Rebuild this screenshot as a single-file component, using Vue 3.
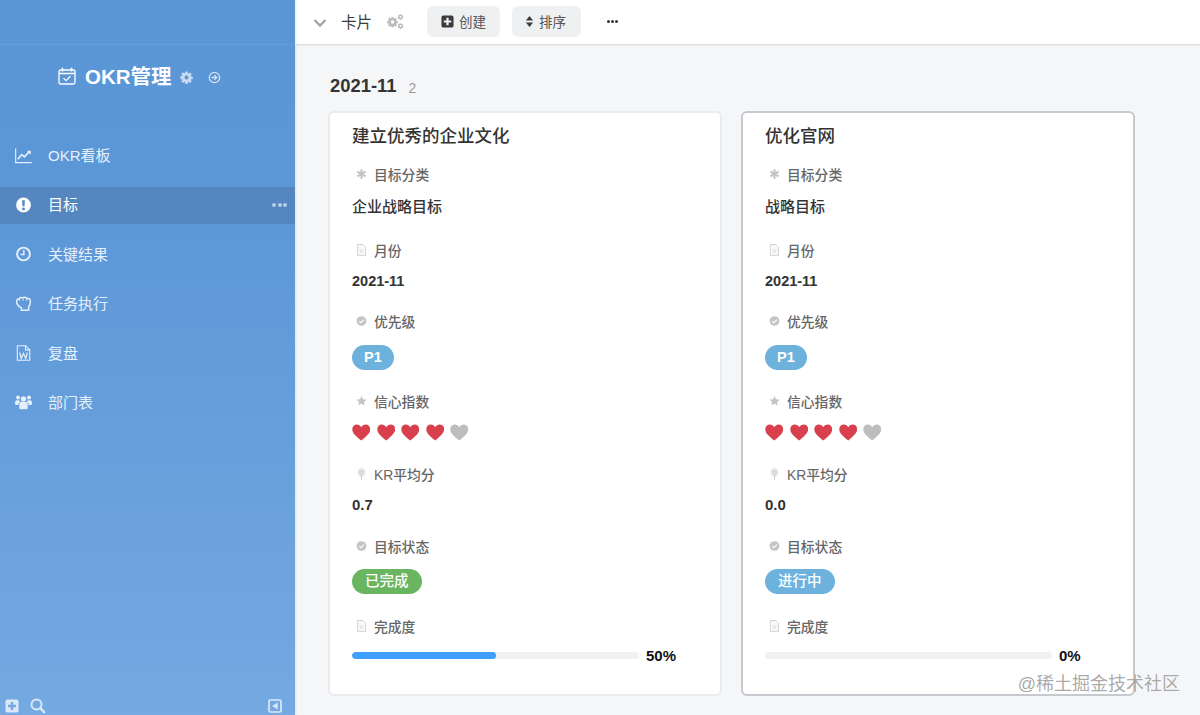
<script setup>
const menu = [
  { label: 'OKR看板', icon: 'chart' },
  { label: '目标', icon: 'alert', active: true },
  { label: '关键结果', icon: 'clock' },
  { label: '任务执行', icon: 'hand' },
  { label: '复盘', icon: 'word' },
  { label: '部门表', icon: 'users' },
]

const cards = [
  { title: '建立优秀的企业文化', category: '企业战略目标', kr: '0.7', status: '已完成', statusClass: 'green', progress: 50, selected: false },
  { title: '优化官网', category: '战略目标', kr: '0.0', status: '进行中', statusClass: 'blue', progress: 0, selected: true },
]

const hearts = [1, 2, 3, 4, 5]
</script>

<template>
  <div class="app">
    <svg class="sprite" width="0" height="0" aria-hidden="true">
      <symbol id="i-calendar" viewBox="0 0 18 18">
        <rect x="1" y="3" width="16" height="14" rx="1.5" fill="none" stroke="currentColor" stroke-width="1.3" />
        <path d="M1 6.5h16M4.5 0.8v3.6M13.5 0.8v3.6" fill="none" stroke="currentColor" stroke-width="1.6" />
        <path d="M5.5 11.2l2.4 2.4 4.6-4.4" fill="none" stroke="currentColor" stroke-width="1.2" />
      </symbol>
      <symbol id="i-gear" viewBox="0 0 14 14">
        <path fill-rule="evenodd" fill="currentColor" d="M5.8 0.5h2.4l.3 1.7 1 .45 1.45-1 1.7 1.7-1 1.45.45 1 1.7.3v2.4l-1.7.3-.45 1 1 1.45-1.7 1.7-1.45-1-1 .45-.3 1.7H5.8l-.3-1.7-1-.45-1.45 1-1.7-1.7 1-1.45-.45-1-1.7-.3V5.8l1.7-.3.45-1-1-1.45 1.7-1.7 1.45 1 1-.45zM7 4.9a2.1 2.1 0 1 0 0 4.2 2.1 2.1 0 0 0 0-4.2z" />
      </symbol>
      <symbol id="i-arrow" viewBox="0 0 14 14">
        <circle cx="7" cy="7" r="5.6" fill="none" stroke="currentColor" stroke-width="1.3" />
        <path d="M3.8 7h5M6.8 4.4L9.4 7 6.8 9.6" fill="none" stroke="currentColor" stroke-width="1.4" />
      </symbol>
      <symbol id="i-chart" viewBox="0 0 18 16">
        <path d="M.7 0v15h17" fill="none" stroke="currentColor" stroke-width="1.2" />
        <path d="M3 11.5l4-5 3 2.5 5-5.5" fill="none" stroke="currentColor" stroke-width="1.8" />
        <path d="M12.5 2.5h4.2v4.2z" fill="currentColor" />
      </symbol>
      <symbol id="i-alert" viewBox="0 0 14 14">
        <path fill-rule="evenodd" fill="currentColor" d="M7 0.5a6.5 6.5 0 1 1 0 13 6.5 6.5 0 0 1 0-13zM5.8 2.8l.3 5.4h1.8l.3-5.4zM7 9.1a1.3 1.3 0 1 0 0 2.6 1.3 1.3 0 0 0 0-2.6z" />
      </symbol>
      <symbol id="i-clock" viewBox="0 0 14 14">
        <circle cx="7" cy="7" r="5.6" fill="none" stroke="currentColor" stroke-width="1.7" />
        <path d="M7.3 3.4v4.1H4.4" fill="none" stroke="currentColor" stroke-width="1.3" />
      </symbol>
      <symbol id="i-hand" viewBox="0 0 14 14">
        <path d="M1 4.6C1 3 2.200 2.400 3.200 2.400 4 1.400 5.300 1.200 6.300 1.600 7.300 1 8.800 1.100 9.700 1.900 11.500 1.700 13 2.800 13 4.800c0 2-.5 3.500-1.500 4.700v3H5.200V10.400C3 9.400 1 7.300 1 4.600z" fill="none" stroke="currentColor" stroke-width="1.300" />
        <path d="M3.200 2.400l.5 2M6.300 1.600l.5 2.400M9.700 1.900l.1 2.200" fill="none" stroke="currentColor" stroke-width=".8" />
      </symbol>
      <symbol id="i-word" viewBox="0 0 14 16">
        <path d="M.8.7h8.400l4 4v10.600H.8zM9 .9v4h4" fill="none" stroke="currentColor" stroke-width="1.100" />
        <path d="M3.200 7.500l1.500 6 2.300-5 2.300 5 1.500-6" fill="none" stroke="currentColor" stroke-width="1.200" />
      </symbol>
      <symbol id="i-users" viewBox="0 0 17 15">
        <circle cx="8.500" cy="4.500" r="2.700" fill="currentColor" />
        <circle cx="3" cy="3" r="2" fill="currentColor" />
        <circle cx="14" cy="3" r="2" fill="currentColor" />
        <path d="M4.300 9.500c0-1.500 1-2.100 2-2.100h4.400c1 0 2 .6 2 2.100v4.100c0 .7-.5 1.100-1.100 1.100H5.400c-.6 0-1.100-.4-1.100-1.100z" fill="currentColor" />
        <path d="M0 9c0-2 .7-3.200 2-3.200h2.200c.3 1 .7 1.500 1.100 1.800-1.100.5-1.900 1.400-2 2.800H1C.4 10.400 0 9.900 0 9zM17 9c0-2-.7-3.200-2-3.200h-2.200c-.3 1-.7 1.500-1.100 1.800 1.100.5 1.900 1.400 2 2.800H16c.6 0 1-.5 1-1.400z" fill="currentColor" />
      </symbol>
      <symbol id="i-plus-box" viewBox="0 0 14 14">
        <path fill-rule="evenodd" fill="currentColor" d="M2.500.5h9a2 2 0 0 1 2 2v9a2 2 0 0 1-2 2h-9a2 2 0 0 1-2-2v-9a2 2 0 0 1 2-2zM5.800 3v2.800H3v2.400h2.800V11h2.400V8.200H11V5.800H8.200V3z" />
      </symbol>
      <symbol id="i-search" viewBox="0 0 16 16">
        <circle cx="6.500" cy="6.500" r="5" fill="none" stroke="currentColor" stroke-width="2" />
        <path d="M10.200 10.200l4.800 4.800" fill="none" stroke="currentColor" stroke-width="2.400" />
      </symbol>
      <symbol id="i-collapse" viewBox="0 0 14 14">
        <rect x="1" y="1" width="12" height="12" rx="1.500" fill="none" stroke="currentColor" stroke-width="1.700" />
        <path d="M9.700 3.500v7L4.200 7z" fill="currentColor" />
      </symbol>
      <symbol id="i-chevron" viewBox="0 0 14 10">
        <path d="M1.500 2l5.500 5.500L12.500 2" fill="none" stroke="currentColor" stroke-width="2.400" />
      </symbol>
      <symbol id="i-gears" viewBox="0 0 17 15">
        <use href="#i-gear" x="0" y="2.500" width="11" height="11" />
        <use href="#i-gear" x="10.500" y="0" width="6" height="6" />
        <use href="#i-gear" x="10.500" y="9" width="6" height="6" />
      </symbol>
      <symbol id="i-sort" viewBox="0 0 10 14">
        <path d="M5 .8l4 5H1zM5 13.200l-4-5h8z" fill="currentColor" />
      </symbol>
      <symbol id="i-asterisk" viewBox="0 0 12 12">
        <path d="M6 .8v10.400M1.500 3.400l9 5.200M10.500 3.400l-9 5.200" fill="none" stroke="currentColor" stroke-width="2.300" />
      </symbol>
      <symbol id="i-file" viewBox="0 0 10 13">
        <path d="M.6.6h5.800l3 3v8.800H.6z" fill="#fafafa" stroke="currentColor" stroke-width=".8" />
        <path d="M3 6l4 4M7 6l-4 4" fill="none" stroke="currentColor" stroke-width=".7" />
      </symbol>
      <symbol id="i-check" viewBox="0 0 12 12">
        <path fill-rule="evenodd" fill="currentColor" d="M6 .7a5.300 5.300 0 1 1 0 10.600A5.300 5.300 0 0 1 6 .7zM8.300 4L5.300 7 3.900 5.600 3 6.500l2.300 2.300 3.900-3.900z" />
      </symbol>
      <symbol id="i-star" viewBox="0 0 12 12">
        <path d="M6 .6l1.700 3.500 3.800.5-2.800 2.700.7 3.800L6 8.800l-3.400 1.800.7-3.800L.5 4.600l3.800-.5z" fill="currentColor" />
      </symbol>
      <symbol id="i-pin" viewBox="0 0 12 14">
        <circle cx="6" cy="5" r="4.600" fill="#e6e6e6" />
        <circle cx="6" cy="5" r="2" fill="none" stroke="currentColor" stroke-width=".9" />
        <path d="M6 8v5.500" stroke="currentColor" stroke-width="1.200" />
      </symbol>
      <symbol id="i-heart" viewBox="0 0 20 18">
        <path d="M10 17.600C4.200 12.800.3 9.700.3 5.400.3 2.400 2.600.4 5.200.4c2 0 3.700 1 4.800 2.800C11.100 1.400 12.800.4 14.800.4c2.600 0 4.900 2 4.900 5 0 4.300-3.900 7.400-9.700 12.200z" fill="currentColor" />
      </symbol>
    </svg>

    <aside class="sidebar">
      <div class="side-top"></div>
      <div class="brand">
        <svg class="brand-icon"><use href="#i-calendar" /></svg>
        <span class="brand-name">OKR管理</span>
        <svg class="brand-gear"><use href="#i-gear" /></svg>
        <svg class="brand-arrow"><use href="#i-arrow" /></svg>
      </div>
      <nav class="menu">
        <div v-for="item in menu" :key="item.label" class="menu-item" :class="{ active: item.active }">
          <svg class="menu-icon"><use :href="'#i-' + item.icon" /></svg>
          <span class="menu-label">{{ item.label }}</span>
          <span v-if="item.active" class="menu-more"><i></i><i></i><i></i></span>
        </div>
      </nav>
      <div class="side-foot">
        <svg class="foot-icon plus"><use href="#i-plus-box" /></svg>
        <svg class="foot-icon search"><use href="#i-search" /></svg>
        <svg class="foot-icon collapse"><use href="#i-collapse" /></svg>
      </div>
    </aside>

    <main class="main">
      <header class="toolbar">
        <svg class="chevron"><use href="#i-chevron" /></svg>
        <span class="view-name">卡片</span>
        <svg class="gears"><use href="#i-gears" /></svg>
        <button class="tool-btn create">
          <svg class="btn-icon"><use href="#i-plus-box" /></svg>创建
        </button>
        <button class="tool-btn sort">
          <svg class="sort-icon"><use href="#i-sort" /></svg>排序
        </button>
        <span class="tool-more"><i></i><i></i><i></i></span>
      </header>

      <section class="content">
        <div class="group-head">
          <span class="group-name">2021-11</span>
          <span class="group-count">2</span>
        </div>
        <div class="cards">
          <article v-for="card in cards" :key="card.title" class="card" :class="{ selected: card.selected }">
            <h3 class="card-title">{{ card.title }}</h3>

            <div class="field f-category">
              <div class="field-label"><svg class="field-icon"><use href="#i-asterisk" /></svg>目标分类</div>
              <div class="field-value">{{ card.category }}</div>
            </div>
            <div class="field f-month">
              <div class="field-label"><svg class="field-icon"><use href="#i-file" /></svg>月份</div>
              <div class="field-value">2021-11</div>
            </div>
            <div class="field f-priority">
              <div class="field-label"><svg class="field-icon"><use href="#i-check" /></svg>优先级</div>
              <div class="field-value"><span class="tag blue bold">P1</span></div>
            </div>
            <div class="field f-confidence">
              <div class="field-label"><svg class="field-icon"><use href="#i-star" /></svg>信心指数</div>
              <div class="field-value hearts">
                <svg v-for="n in hearts" :key="n" class="heart" :class="{ off: n === 5 }"><use href="#i-heart" /></svg>
              </div>
            </div>
            <div class="field f-score">
              <div class="field-label"><svg class="field-icon"><use href="#i-pin" /></svg>KR平均分</div>
              <div class="field-value">{{ card.kr }}</div>
            </div>
            <div class="field f-status">
              <div class="field-label"><svg class="field-icon"><use href="#i-check" /></svg>目标状态</div>
              <div class="field-value"><span class="tag" :class="card.statusClass">{{ card.status }}</span></div>
            </div>
            <div class="field f-progress">
              <div class="field-label"><svg class="field-icon"><use href="#i-file" /></svg>完成度</div>
              <div class="field-value progress">
                <div class="bar"><div class="bar-fill" :style="{ width: card.progress + '%' }"></div></div>
                <span class="percent">{{ card.progress }}%</span>
              </div>
            </div>
          </article>
        </div>
      </section>
    </main>

    <div class="watermark">@稀土掘金技术社区</div>
  </div>
</template>

<style scoped>
.app {
  position: relative;
  display: flex;
  width: 1200px;
  height: 715px;
  overflow: hidden;
  font-family: "Liberation Sans", "Noto Sans CJK SC", sans-serif;
  background: #f5f6f8;
}

.sprite {
  position: absolute;
}

/* sidebar */
.sidebar {
  display: flex;
  flex-direction: column;
  flex: 0 0 295px;
  height: 715px;
  color: #fff;
  background: linear-gradient(180deg, #5a95d5 0%, #5c97d8 30%, #74a9e1 100%);
  box-shadow: 1px 0 2px rgba(0, 0, 0, 0.08);
  z-index: 2;
}

.side-top {
  height: 44px;
  border-bottom: 1px solid rgba(255, 255, 255, 0.08);
}

.brand {
  display: flex;
  align-items: center;
  height: 34px;
  margin-top: 15px;
  padding-left: 58px;
}

.brand-icon {
  width: 18px;
  height: 18px;
  margin-top: -3px;
}

.brand-name {
  margin-left: 9px;
  font-size: 20.5px;
  font-weight: 700;
  line-height: 34px;
}

.brand-gear {
  width: 13px;
  height: 13px;
  margin-left: 8px;
  color: #c5daf2;
}

.brand-arrow {
  width: 13px;
  height: 13px;
  margin-left: 15px;
  color: #d7e6f6;
}

.menu {
  display: flex;
  flex-direction: column;
  gap: 12.4px;
  margin-top: 44px;
}

.menu-item {
  display: flex;
  align-items: center;
  box-sizing: border-box;
  height: 37px;
  padding: 0 8px 2px 15px;
  color: #e6f0fb;
}

.menu-item.active {
  color: #fff;
  background: #5586bf;
}

.menu-icon {
  width: 17px;
  height: 16px;
}

.menu-label {
  margin-left: 16px;
  font-size: 15px;
  line-height: 35px;
}

.menu-more {
  display: flex;
  gap: 1.5px;
  margin-left: auto;
}

.menu-more i {
  width: 4px;
  height: 4px;
  border-radius: 50%;
  background: #b6cde8;
}

.side-foot {
  display: flex;
  align-items: center;
  height: 18px;
  margin-top: auto;
  padding: 0 13px 0 5px;
  color: #dbe8f7;
}

.foot-icon.plus {
  width: 14px;
  height: 14px;
}

.foot-icon.search {
  width: 16px;
  height: 16px;
  margin-left: 11px;
}

.foot-icon.collapse {
  width: 14px;
  height: 14px;
  margin-left: auto;
}

/* main */
.main {
  display: flex;
  flex-direction: column;
  flex: 1;
  min-width: 0;
}

.toolbar {
  display: flex;
  align-items: center;
  height: 44px;
  padding: 0 0 1px 18px;
  box-sizing: border-box;
  background: #fff;
  box-shadow: 0 1px 2px rgba(0, 0, 0, 0.12);
  color: #333;
}

.chevron {
  width: 14px;
  height: 10px;
  margin-top: 3px;
  color: #a4a4a4;
}

.view-name {
  margin-left: 14px;
  margin-top: -2px;
  font-size: 15.5px;
  color: #3c3c3c;
}

.gears {
  width: 17px;
  height: 15px;
  margin-left: 15px;
  color: #bcbcbc;
}

.tool-btn {
  display: flex;
  align-items: center;
  height: 31px;
  padding: 0 0 2px;
  border: 0;
  border-radius: 6px;
  background: #eff0f2;
  color: #555;
  font-family: inherit;
  font-size: 13.5px;
}

.create {
  width: 73px;
  margin-left: 23px;
  padding-left: 14px;
}

.sort {
  width: 69px;
  margin-left: 12px;
  padding-left: 13px;
}

.btn-icon {
  width: 13px;
  height: 13px;
  margin-top: 2px;
  margin-right: 5px;
  color: #3a3a3a;
}

.sort-icon {
  width: 9px;
  height: 13px;
  margin-top: 2px;
  margin-right: 5px;
  color: #3a3a3a;
}

.tool-more {
  display: flex;
  gap: 1px;
  margin-left: 26px;
}

.tool-more i {
  width: 3px;
  height: 3px;
  border-radius: 50%;
  background: #333;
}

.content {
  padding: 30px 0 0 33px;
}

.group-head {
  display: flex;
  align-items: center;
  height: 24px;
  padding-left: 2px;
}

.group-name {
  font-size: 18.4px;
  font-weight: 700;
  color: #333;
}

.group-count {
  margin-left: 12px;
  margin-top: 3px;
  font-size: 14px;
  color: #999;
}

.cards {
  display: flex;
  gap: 19px;
  margin-top: 13px;
}

.card {
  box-sizing: border-box;
  width: 394px;
  height: 585px;
  padding: 0 22px;
  border: 2px solid #e9ebee;
  border-radius: 6px;
  background: #fff;
}

.card.selected {
  border-color: #c6c9cd;
}

.card-title {
  margin: 0;
  height: 42px;
  font-size: 17.5px;
  font-weight: 500;
  line-height: 46px;
  color: #333;
}

.field-label {
  display: flex;
  align-items: center;
  height: 20px;
  padding-left: 4px;
  font-size: 13.8px;
  font-weight: 500;
  color: #666;
}

.field-icon {
  width: 11px;
  height: 12px;
  margin-right: 7px;
  color: #c4c4c4;
}

.field-value {
  display: flex;
  align-items: center;
  font-size: 15px;
  font-weight: 500;
  color: #333;
}

.f-category {
  margin-top: 9px;
  margin-bottom: 14px;
}

.f-category .field-value {
  height: 42px;
}

.f-month {
  margin-bottom: 11px;
}

.f-month .field-value {
  height: 42px;
  font-weight: 700;
  font-size: 14.5px;
  margin-bottom: -2px;
}

.f-priority {
  margin-bottom: 10px;
}

.f-priority .field-value {
  height: 52px;
  margin-bottom: -2px;
}

.f-confidence {
  margin-bottom: 13px;
}

.f-confidence .field-value {
  height: 42px;
  margin-bottom: -2px;
}

.f-score {
  margin-bottom: 12px;
}

.f-score .field-value {
  height: 40px;
  font-weight: 700;
}

.f-status {
  margin-bottom: 12px;
}

.f-status .field-value {
  height: 50px;
  margin-bottom: -2px;
}

.f-progress .field-value {
  height: 38px;
}

.tag {
  display: inline-block;
  height: 25px;
  padding: 0 13px;
  border-radius: 13px;
  color: #fff;
  font-size: 14.5px;
  line-height: 25px;
}

.tag.bold {
  font-weight: 700;
  padding: 0 12px;
}

.tag.blue {
  background: #6cb2dd;
}

.tag.green {
  background: #6ab560;
}

.hearts {
  gap: 6px;
}

.heart {
  width: 18.500px;
  height: 17px;
  color: #d9404e;
}

.heart.off {
  color: #bdbdbd;
}

.progress {
  gap: 7px;
}

.bar {
  width: 287px;
  height: 7px;
  border-radius: 4px;
  background: #f0f1f3;
  overflow: hidden;
}

.bar-fill {
  height: 100%;
  border-radius: 4px;
  background: #409eff;
}

.percent {
  font-size: 15px;
  font-weight: 700;
  color: #111;
}

.watermark {
  position: absolute;
  right: 20px;
  bottom: 17px;
  z-index: 3;
  font-size: 18px;
  line-height: 28px;
  color: rgba(120, 120, 120, 0.65);
  text-shadow: 0 0 1px rgba(255, 255, 255, 0.8);
}
</style>
